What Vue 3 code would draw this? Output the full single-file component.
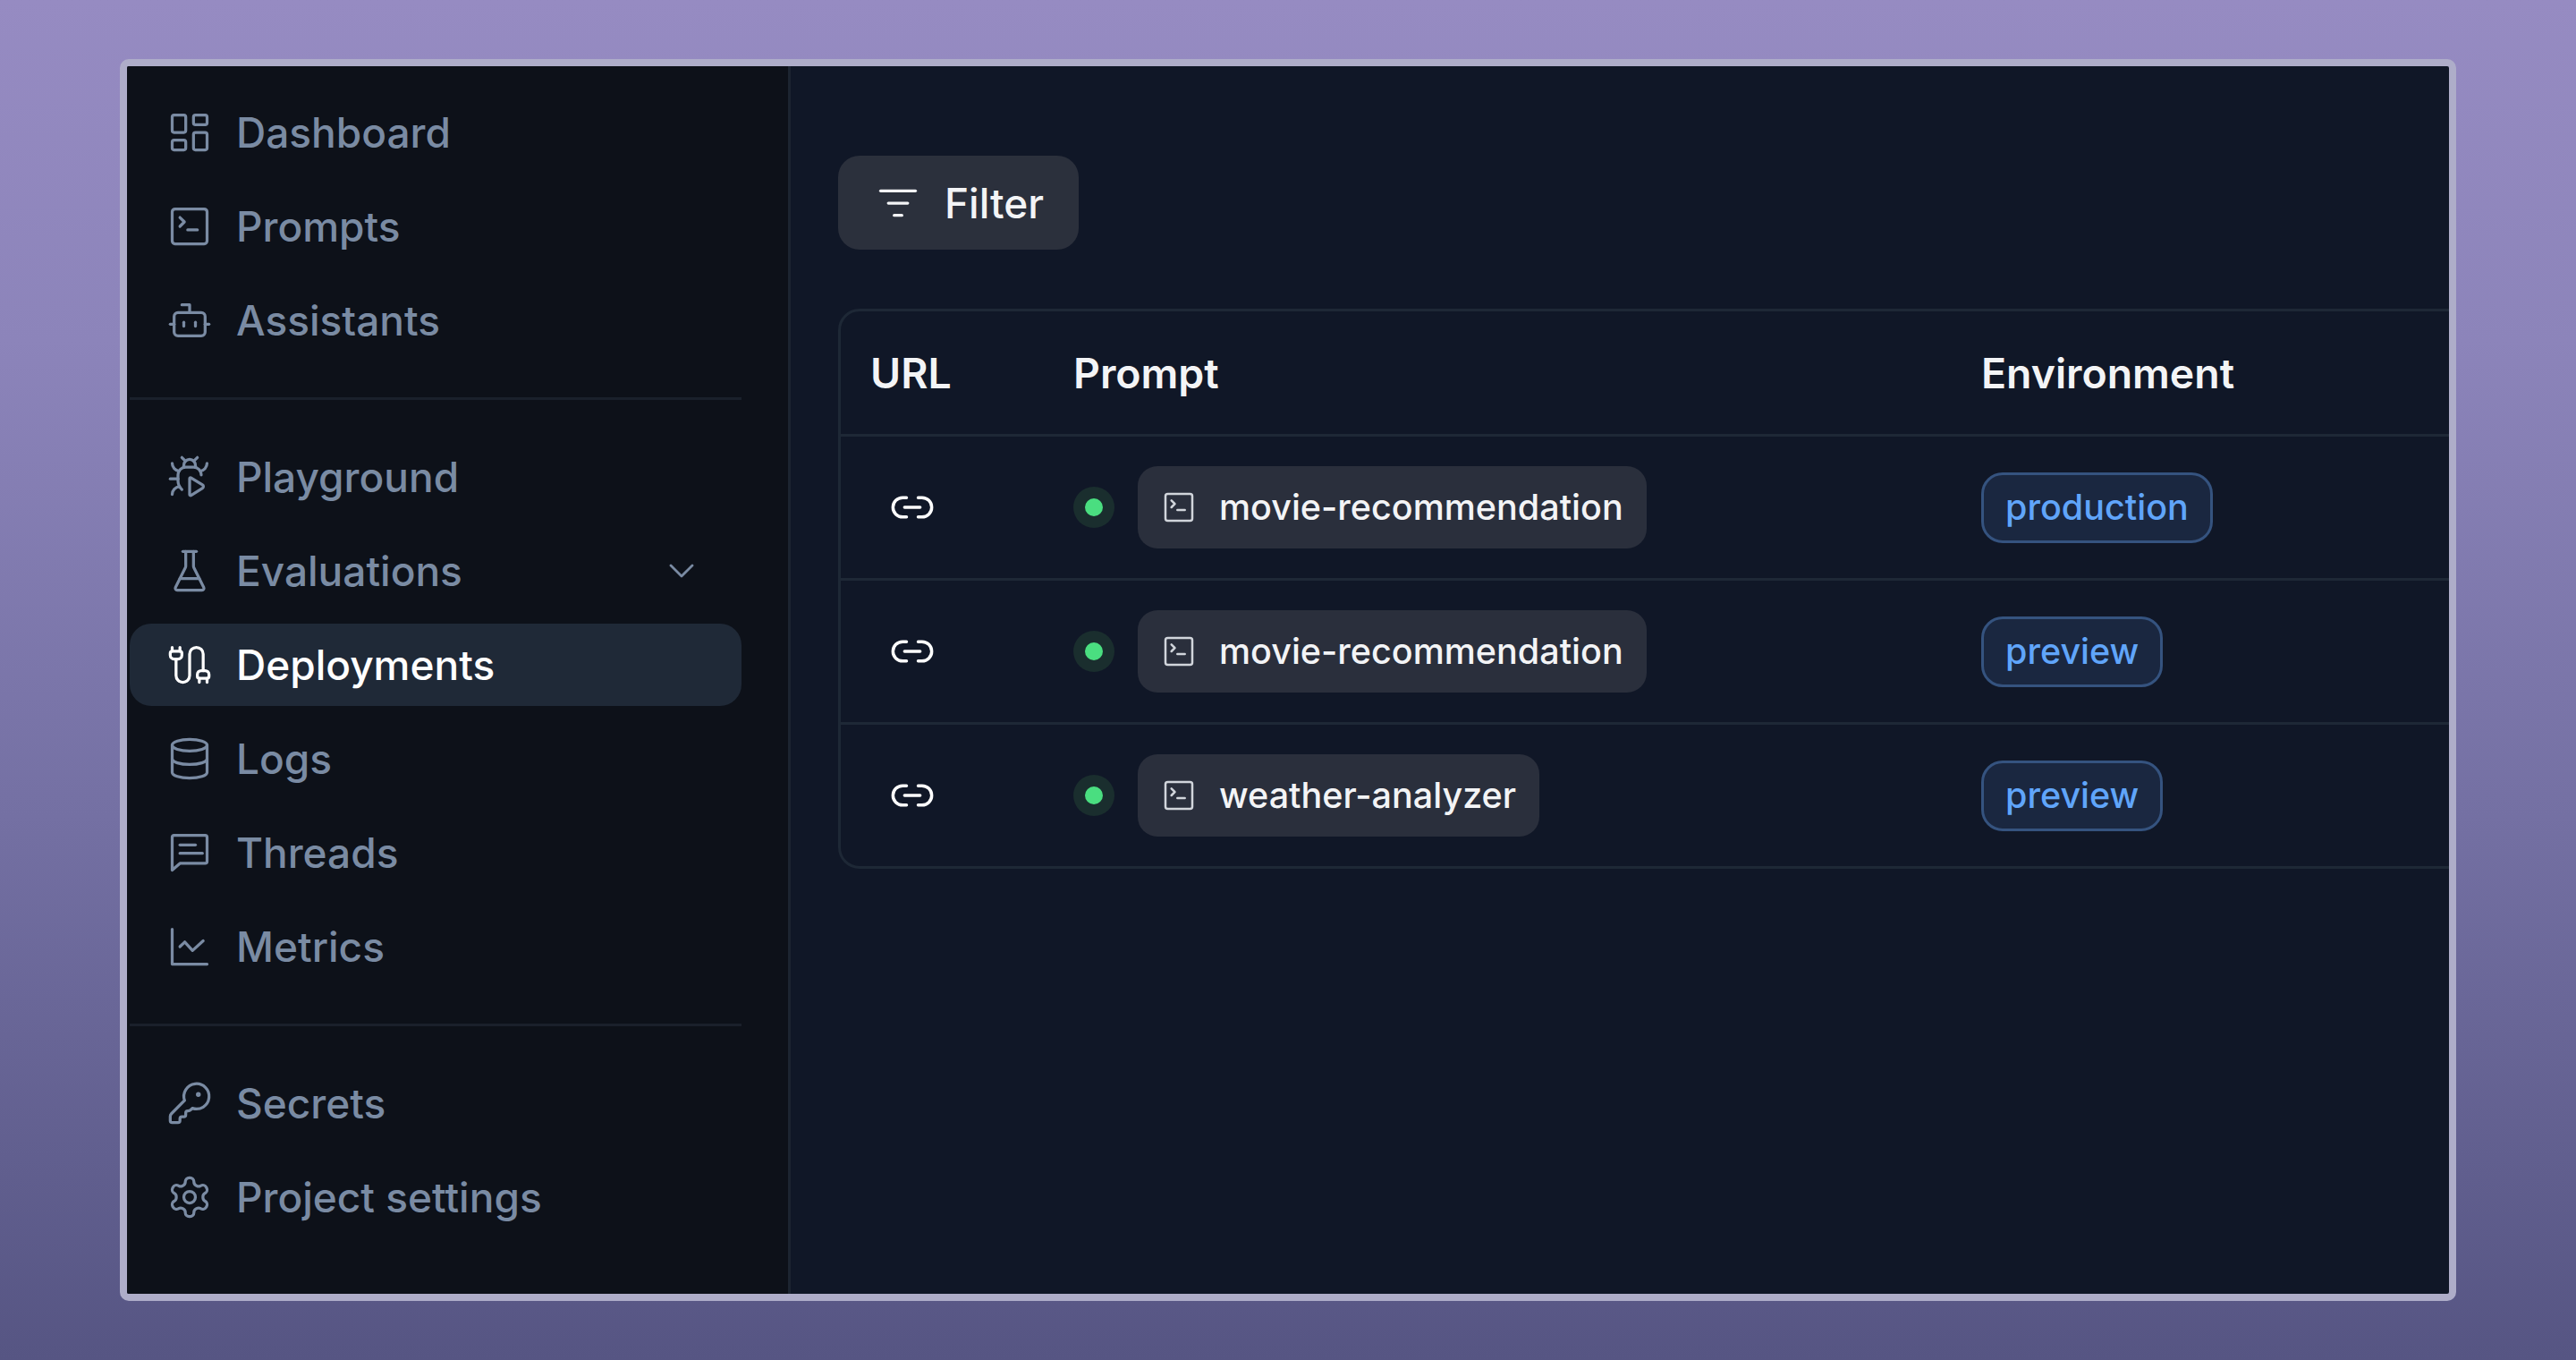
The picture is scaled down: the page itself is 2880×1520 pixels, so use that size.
<script setup>
const icons = {
  dashboard: '<rect x="3" y="3" width="7" height="9" rx="1"/><rect x="14" y="3" width="7" height="5" rx="1"/><rect x="14" y="12" width="7" height="9" rx="1"/><rect x="3" y="16" width="7" height="5" rx="1"/>',
  terminal: '<path d="m7 12 2.3-2.3L7 7.4"/><path d="M11 13.8h5"/><rect x="3" y="3" width="18" height="18" rx="1.5"/>',
  bot: '<path d="M12 8V4H8"/><rect x="4" y="8" width="16" height="12" rx="2"/><path d="M2 14h2"/><path d="M20 14h2"/><path d="M15 13v2"/><path d="M9 13v2"/>',
  bug: '<path d="M12.765 21.522a.5.5 0 0 1-.765-.424v-8.196a.5.5 0 0 1 .765-.424l5.878 3.674a1 1 0 0 1 0 1.696z"/><path d="M14.12 3.88 16 2"/><path d="M18 11a4 4 0 0 0-4-4h-4a4 4 0 0 0-4 4v3a6.1 6.1 0 0 0 2 4.5"/><path d="M20.97 5c0 2.1-1.6 3.8-3.5 4"/><path d="M3 21c0-2.1 1.7-3.9 3.8-4"/><path d="M6 13H2"/><path d="M6.53 9C4.6 8.8 3 7.1 3 5"/><path d="m8 2 1.88 1.88"/><path d="M9 7.13v-1a3.003 3.003 0 1 1 6 0v1"/>',
  flask: '<path d="M10 2v7.527a2 2 0 0 1-.211.896L4.72 20.55a1 1 0 0 0 .9 1.45h12.76a1 1 0 0 0 .9-1.45l-5.069-10.127A2 2 0 0 1 14 9.527V2"/><path d="M8.5 2h7"/><path d="M7 16h10"/>',
  cable: '<path d="M17 21v-2a1 1 0 0 1-1-1v-1a2 2 0 0 1 2-2h2a2 2 0 0 1 2 2v1a1 1 0 0 1-1 1"/><path d="M19 15V6.5a3.5 3.5 0 0 0-7 0v11a3.5 3.5 0 0 1-7 0V9"/><path d="M21 21v-2h-4"/><path d="M3 5h4V3"/><path d="M7 5a1 1 0 0 1 1 1v1a2 2 0 0 1-2 2H4a2 2 0 0 1-2-2V6a1 1 0 0 1 1-1V3"/>',
  database: '<ellipse cx="12" cy="5" rx="9" ry="3"/><path d="M3 12a9 3 0 0 0 18 0"/><path d="M3 5v14a9 3 0 0 0 18 0V5"/>',
  message: '<path d="M21 16.5a1 1 0 0 1-1 1H7l-4 3.5V4a1 1 0 0 1 1-1h16a1 1 0 0 1 1 1z"/><path d="M7 8h8"/><path d="M7 12.3h11.6"/>',
  chart: '<path d="M3 3v18h18"/><path d="m19 9-5.5 5-4-4.4L7 12"/>',
  key: '<path d="M2.586 17.414A2 2 0 0 0 2 18.828V21a1 1 0 0 0 1 1h3a1 1 0 0 0 1-1v-1a1 1 0 0 1 1-1h1a1 1 0 0 0 1-1v-1a1 1 0 0 1 1-1h.172a2 2 0 0 0 1.414-.586l.814-.814a6.5 6.5 0 1 0-4-4z"/><circle cx="16.5" cy="7.5" r=".5" fill="currentColor"/>',
  settings: '<path d="M12.22 2h-.44a2 2 0 0 0-2 2v.18a2 2 0 0 1-1 1.73l-.43.25a2 2 0 0 1-2 0l-.15-.08a2 2 0 0 0-2.73.73l-.22.38a2 2 0 0 0 .73 2.73l.15.1a2 2 0 0 1 1 1.72v.51a2 2 0 0 1-1 1.74l-.15.09a2 2 0 0 0-.73 2.73l.22.38a2 2 0 0 0 2.73.73l.15-.08a2 2 0 0 1 2 0l.43.25a2 2 0 0 1 1 1.73V20a2 2 0 0 0 2 2h.44a2 2 0 0 0 2-2v-.18a2 2 0 0 1 1-1.73l.43-.25a2 2 0 0 1 2 0l.15.08a2 2 0 0 0 2.73-.73l.22-.39a2 2 0 0 0-.73-2.73l-.15-.08a2 2 0 0 1-1-1.74v-.5a2 2 0 0 1 1-1.74l.15-.09a2 2 0 0 0 .73-2.73l-.22-.38a2 2 0 0 0-2.73-.73l-.15.08a2 2 0 0 1-2 0l-.43-.25a2 2 0 0 1-1-1.73V4a2 2 0 0 0-2-2z"/><circle cx="12" cy="12" r="3"/>',
  chevron: '<path d="m6 9 6 6 6-6"/>',
  filter: '<path d="M3 5.7h18"/><path d="M7 12h10"/><path d="M10 18.3h4"/>',
  link: '<path d="M9 17H7A5 5 0 0 1 7 7h2"/><path d="M15 7h2a5 5 0 1 1 0 10h-2"/><path d="M8 12h8"/>'
}

const navGroups = [
  [
    { label: 'Dashboard', icon: 'dashboard' },
    { label: 'Prompts', icon: 'terminal' },
    { label: 'Assistants', icon: 'bot' }
  ],
  [
    { label: 'Playground', icon: 'bug' },
    { label: 'Evaluations', icon: 'flask', expandable: true },
    { label: 'Deployments', icon: 'cable', active: true },
    { label: 'Logs', icon: 'database' },
    { label: 'Threads', icon: 'message' },
    { label: 'Metrics', icon: 'chart' }
  ],
  [
    { label: 'Secrets', icon: 'key' },
    { label: 'Project settings', icon: 'settings' }
  ]
]

const rows = [
  { prompt: 'movie-recommendation', env: 'production' },
  { prompt: 'movie-recommendation', env: 'preview' },
  { prompt: 'weather-analyzer', env: 'preview' }
]
</script>

<template>
  <div class="page">
    <div class="frame">
      <aside class="sidebar">
        <div v-for="(group, i) in navGroups" :key="i" class="nav-group">
          <div
            v-for="item in group"
            :key="item.label"
            :class="['nav-item', { active: item.active }]"
          >
            <svg class="icon" viewBox="0 0 24 24" v-html="icons[item.icon]"></svg>
            <span class="nav-label">{{ item.label }}</span>
            <svg v-if="item.expandable" class="chevron" viewBox="0 0 24 24" v-html="icons.chevron"></svg>
          </div>
        </div>
      </aside>

      <main class="main">
        <button class="filter-btn">
          <svg class="icon" viewBox="0 0 24 24" v-html="icons.filter"></svg>
          <span>Filter</span>
        </button>

        <div class="table">
          <div class="row head">
            <div class="cell-url">URL</div>
            <div>Prompt</div>
            <div>Environment</div>
          </div>
          <div v-for="(row, i) in rows" :key="i" class="row">
            <div class="cell-url">
              <svg class="link-icon" viewBox="0 0 24 24" v-html="icons.link"></svg>
            </div>
            <div class="cell-prompt">
              <span class="status"><span class="status-dot"></span></span>
              <span class="prompt-pill">
                <svg class="pill-icon" viewBox="0 0 24 24" v-html="icons.terminal"></svg>
                {{ row.prompt }}
              </span>
            </div>
            <div>
              <span class="env-badge">{{ row.env }}</span>
            </div>
          </div>
        </div>
      </main>
    </div>
  </div>
</template>

<style>
html, body { margin: 0; background: #565583; }
</style>

<style scoped>
.page {
  box-sizing: border-box;
  width: 2880px;
  height: 1520px;
  padding: 66px 134px;
  background: linear-gradient(180deg, #968bc2 0%, #8c84ba 25%, #7470a3 60%, #565583 100%);
  font-family: Inter, "Noto Sans", sans-serif;
  font-optical-sizing: none;
  overflow: hidden;
}
.frame {
  box-sizing: border-box;
  height: 1388px;
  display: flex;
  border: 8px solid #aeadc9;
  border-radius: 10px;
  background: #101727;
  overflow: hidden;
}
.sidebar {
  box-sizing: border-box;
  width: 742px;
  flex-shrink: 0;
  padding: 28px 52px 0 3px;
  background: #0d1119;
  border-right: 3px solid #1c2431;
}
.nav-group {
  display: flex;
  flex-direction: column;
  gap: 13px;
  padding-bottom: 40px;
  margin-bottom: 40px;
  border-bottom: 3px solid #1a202b;
}
.nav-group:last-child { border-bottom: none; }
.nav-item {
  display: flex;
  align-items: center;
  gap: 26px;
  height: 92px;
  padding: 0 43px 0 41px;
  border-radius: 24px;
  color: #7a8ba3;
  font-size: 46px;
  font-weight: 460;
}
.nav-item.active {
  background: #1f2937;
  color: #fff;
}
.icon {
  width: 52px;
  height: 52px;
  flex-shrink: 0;
  fill: none;
  stroke: currentColor;
  stroke-width: 1.5;
  stroke-linecap: round;
  stroke-linejoin: round;
}
.nav-label { flex: 1; }
.chevron {
  width: 48px;
  height: 48px;
  fill: none;
  stroke: currentColor;
  stroke-width: 1.4;
  stroke-linecap: round;
  stroke-linejoin: round;
}
.main {
  flex: 1;
  min-width: 0;
  padding: 100px 0 0 53px;
  overflow: hidden;
}
.filter-btn {
  display: flex;
  align-items: center;
  gap: 26px;
  width: 269px;
  height: 105px;
  padding: 0 0 0 41px;
  border: none;
  border-radius: 24px;
  background: #2b303c;
  color: #f3f4f6;
  font-family: inherit;
  font-size: 46px;
  font-weight: 480;
  font-optical-sizing: none;
}
.table {
  box-sizing: border-box;
  width: 2200px;
  margin-top: 66px;
  border: 3px solid #1e2836;
  border-radius: 24px;
}
.row {
  display: grid;
  grid-template-columns: 260px 1015px 1fr;
  align-items: center;
  height: 158px;
  border-top: 3px solid #1e2836;
  font-size: 39.5px;
  font-weight: 460;
  color: #f3f4f6;
}
.row.head {
  height: 137px;
  border-top: none;
  font-size: 46.4px;
  font-weight: 630;
}
.head .cell-url { padding-left: 33px; }
.cell-url { padding-left: 54px; }
.link-icon {
  display: block;
  width: 52px;
  height: 52px;
  fill: none;
  stroke: #fff;
  stroke-width: 1.6;
  stroke-linecap: round;
  stroke-linejoin: round;
}
.cell-prompt {
  display: flex;
  align-items: center;
  gap: 26px;
}
.status {
  display: flex;
  align-items: center;
  justify-content: center;
  width: 46px;
  height: 46px;
  border-radius: 50%;
  background: #1a2e2e;
}
.status-dot {
  width: 20px;
  height: 20px;
  border-radius: 50%;
  background: #4ade80;
}
.prompt-pill {
  display: inline-flex;
  align-items: center;
  gap: 25px;
  height: 92px;
  padding: 0 26px 0 26px;
  border-radius: 22px;
  background: #2a2f3c;
  color: #f3f4f6;
}
.pill-icon {
  width: 40px;
  height: 40px;
  fill: none;
  stroke: #d1d5db;
  stroke-width: 1.5;
  stroke-linecap: round;
  stroke-linejoin: round;
}
.env-badge {
  display: inline-flex;
  align-items: center;
  box-sizing: border-box;
  height: 79px;
  padding: 0 24px;
  border: 3px solid #35537f;
  border-radius: 24px;
  background: #1a2740;
  color: #60a5fa;
}
</style>
